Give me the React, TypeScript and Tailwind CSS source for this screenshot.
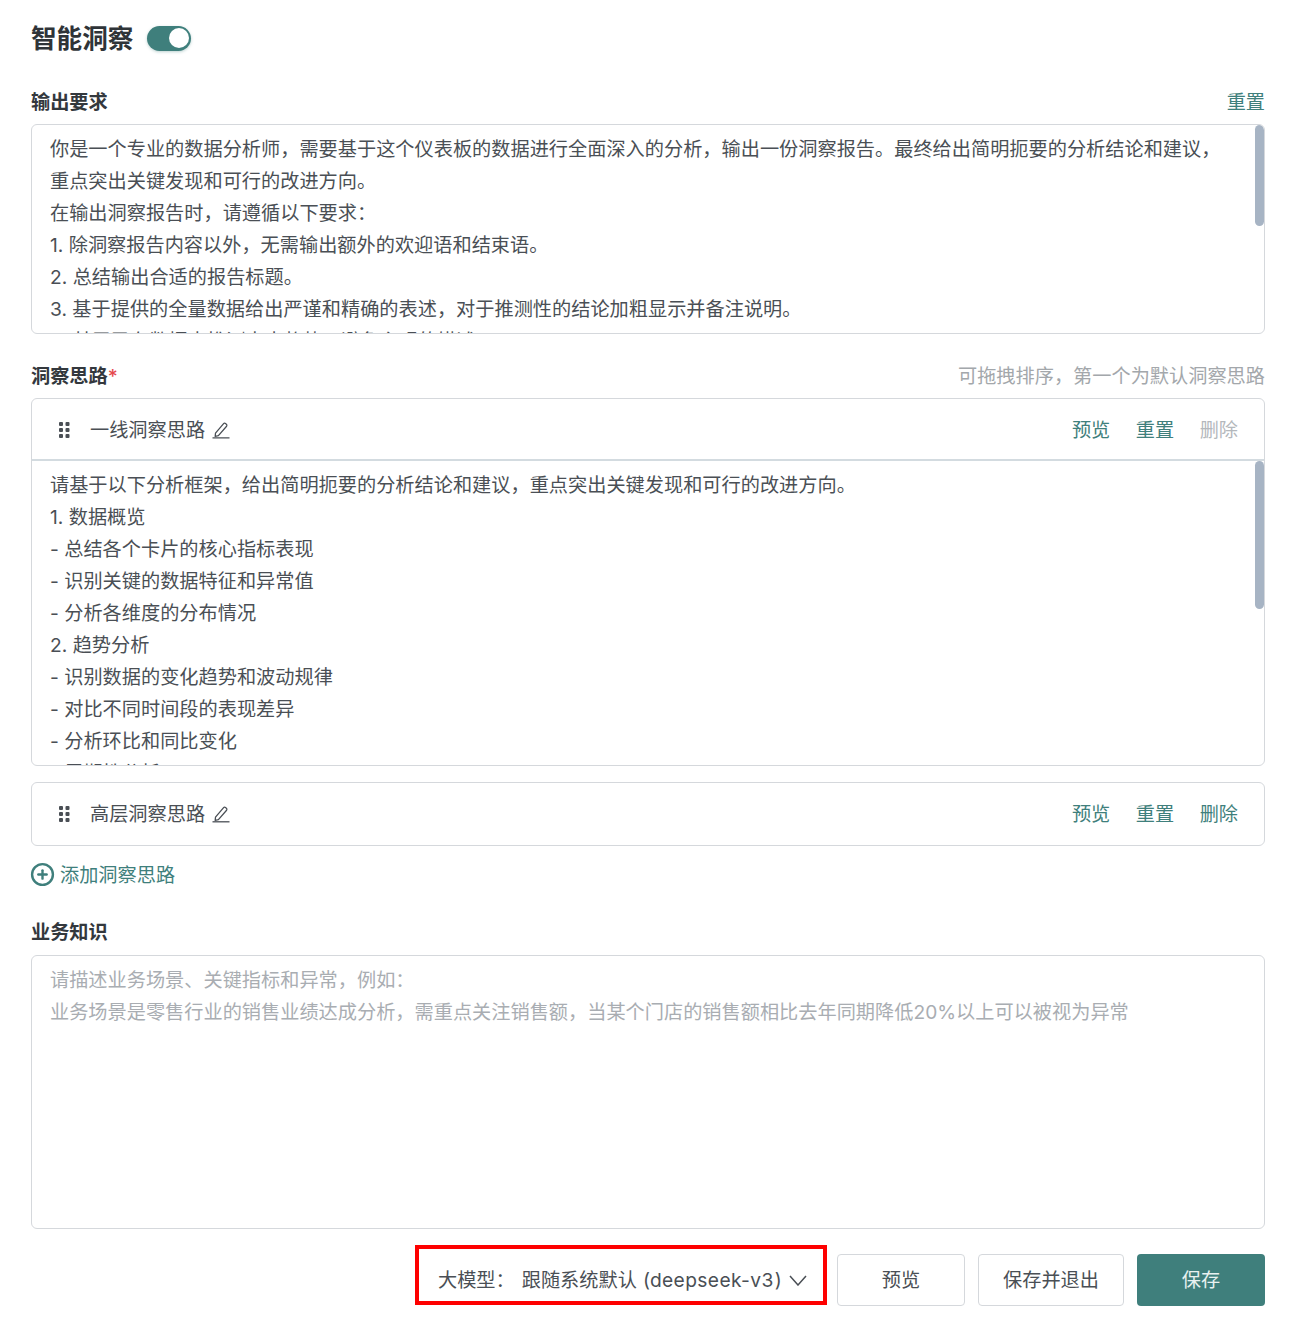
import { CirclePlus } from "lucide-react";

const teal = "text-[#3f7f7c]";

const outputLines = [
  "你是一个专业的数据分析师，需要基于这个仪表板的数据进行全面深入的分析，输出一份洞察报告。最终给出简明扼要的分析结论和建议，",
  "重点突出关键发现和可行的改进方向。",
  "在输出洞察报告时，请遵循以下要求：",
  "1. 除洞察报告内容以外，无需输出额外的欢迎语和结束语。",
  "2. 总结输出合适的报告标题。",
  "3. 基于提供的全量数据给出严谨和精确的表述，对于推测性的结论加粗显示并备注说明。",
  "4. 基于已有数据来推测未来趋势，避免主观的描述。",
];

const ideaLines = [
  "请基于以下分析框架，给出简明扼要的分析结论和建议，重点突出关键发现和可行的改进方向。",
  "1. 数据概览",
  "- 总结各个卡片的核心指标表现",
  "- 识别关键的数据特征和异常值",
  "- 分析各维度的分布情况",
  "2. 趋势分析",
  "- 识别数据的变化趋势和波动规律",
  "- 对比不同时间段的表现差异",
  "- 分析环比和同比变化",
  "- 周期性分析",
];

function GripIcon() {
  return (
    <svg width="11" height="16" viewBox="0 0 11 16" className="fill-[#4a4f55] shrink-0">
      <rect x="0" y="0" width="4" height="4" rx="1" />
      <rect x="6.5" y="0" width="4" height="4" rx="1" />
      <rect x="0" y="6" width="4" height="4" rx="1" />
      <rect x="6.5" y="6" width="4" height="4" rx="1" />
      <rect x="0" y="12" width="4" height="4" rx="1" />
      <rect x="6.5" y="12" width="4" height="4" rx="1" />
    </svg>
  );
}

function PenIcon() {
  return (
    <svg width="18" height="18" viewBox="0 0 18 18" fill="none" stroke="#4a4f55" strokeWidth="1.3" className="shrink-0">
      <path d="M3.5 12.2 11.6 2.6c.5-.6 1.3-.6 1.9-.1l.9.8c.6.5.6 1.3.2 1.9L6.4 14.6l-3.2.7z" strokeLinejoin="round" />
      <path d="M0.5 16.8h17" />
    </svg>
  );
}

function IdeaHeader(props: { name: string; canDelete: boolean; border?: boolean }) {
  return (
    <div className={`h-[62px] flex items-center justify-between pl-[27px] pr-[26px] ${props.border ? "pt-px border-b-2 border-[#d3dbe0]" : ""}`}>
      <div className="flex items-center">
        <GripIcon />
        <span className="ml-[20px] mr-[7px]">{props.name}</span>
        <PenIcon />
      </div>
      <div className="flex items-center gap-[25.5px]">
        <span className={teal}>预览</span>
        <span className={teal}>重置</span>
        <span className={props.canDelete ? teal : "text-[#b4b8bc]"}>删除</span>
      </div>
    </div>
  );
}

function Scrollbar(props: { height: string }) {
  return <div className={`absolute top-0 right-0 w-[9px] rounded-full bg-[#a7b4c4] ${props.height}`}></div>;
}

export default function App() {
  return (
    <div
      lang="zh-CN"
      className="w-[1310px] h-[1340px] bg-white overflow-hidden pl-[31px] pr-[45px] pt-[22px] text-[19.2px] leading-[32px] text-[#4a4f55]"
      style={{ fontFamily: 'Inter, "Noto Sans CJK SC", sans-serif' }}
    >
      <div className="h-[32px] flex items-center">
        <h1 className="mt-[2px] text-[25.6px] leading-[32px] font-semibold text-[#2f3438]">智能洞察</h1>
        <div className="ml-[14px] w-[44px] h-[25px] rounded-full bg-[#3f7f7c] flex items-center justify-end pr-[2px] shadow-[0_1px_3px_rgba(63,127,124,0.35)]">
          <div className="w-[20px] h-[20px] rounded-full bg-white"></div>
        </div>
      </div>

      <div className="mt-[32px] h-[38px] flex justify-between items-start">
        <span className="font-semibold text-[#33383d]">输出要求</span>
        <span className={teal}>重置</span>
      </div>
      <div className="relative h-[210px] border border-[#d5d8dc] rounded-[6px] overflow-hidden px-[18px] pt-[8px]">
        {outputLines.map((line) => (
          <div key={line} className="whitespace-nowrap">{line}</div>
        ))}
        <Scrollbar height="h-[101px]" />
      </div>

      <div className="mt-[26px] h-[38px] flex justify-between items-start">
        <span className="font-semibold text-[#33383d]">
          洞察思路<span className="text-[#e5484d] font-medium">*</span>
        </span>
        <span className="text-[#a3a7ab]">可拖拽排序，第一个为默认洞察思路</span>
      </div>
      <div className="h-[368px] border border-[#d5d8dc] rounded-[6px] overflow-hidden">
        <IdeaHeader name="一线洞察思路" canDelete={false} border />
        <div className="relative h-[304px] overflow-hidden px-[18px] pt-[8px]">
          {ideaLines.map((line) => (
            <div key={line} className="whitespace-nowrap">{line}</div>
          ))}
          <Scrollbar height="h-[148px]" />
        </div>
      </div>
      <div className="mt-[16px] h-[64px] border border-[#d5d8dc] rounded-[6px]">
        <IdeaHeader name="高层洞察思路" canDelete />
      </div>

      <div className={`mt-[13px] h-[32px] flex items-center ${teal}`}>
        <CirclePlus size={25} strokeWidth={2.3} className="shrink-0 -ml-[1px] -mt-[2px]" />
        <span className="ml-[5px]">添加洞察思路</span>
      </div>

      <div className="mt-[25px] h-[39px] font-semibold text-[#33383d]">业务知识</div>
      <div className="h-[274px] border border-[#d5d8dc] rounded-[6px] px-[18px] pt-[8px] text-[#a9adb2]">
        <div>请描述业务场景、关键指标和异常，例如：</div>
        <div>业务场景是零售行业的销售业绩达成分析，需重点关注销售额，当某个门店的销售额相比去年同期降低20%以上可以被视为异常</div>
      </div>

      <div className="mt-[16px] flex justify-end items-end gap-[13px]">
        <div className="-mr-[3px] mb-px w-[412px] h-[60px] border-[4px] border-[#fe0000] flex items-center pl-[19px] pt-[10px]">
          <span className="whitespace-nowrap">大模型：</span>
          <span className="ml-[7px] whitespace-nowrap">
            跟随系统默认<span className="ml-[6px]">(</span><span className="tracking-[0.4px]">deepseek-v3</span><span className="ml-[1px]">)</span>
          </span>
          <svg width="18" height="11" viewBox="0 0 18 11" fill="none" stroke="#4a4f55" strokeWidth="1.5" className="ml-[7px] shrink-0">
            <path d="M1 1l8 9 8-9" />
          </svg>
        </div>
        <button className="w-[128px] h-[52px] border border-[#d5d8dc] rounded-[4px]">预览</button>
        <button className="w-[146px] h-[52px] border border-[#d5d8dc] rounded-[4px]">保存并退出</button>
        <button className="w-[128px] h-[52px] rounded-[4px] bg-[#3f7f7c] text-[#e8f1f0]">保存</button>
      </div>
    </div>
  );
}
